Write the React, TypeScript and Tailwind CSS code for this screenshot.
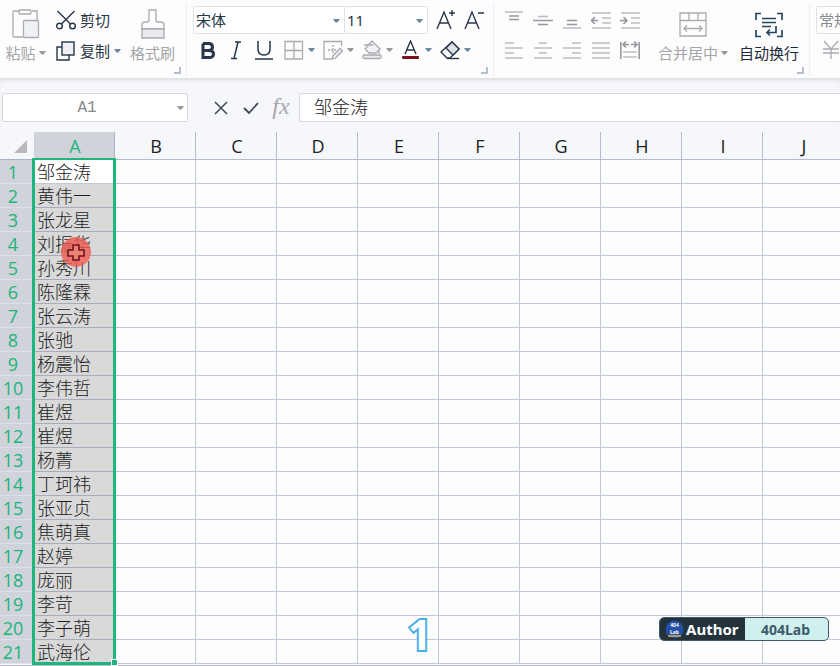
import type { ReactNode } from "react";

const COLUMNS = ["A", "B", "C", "D", "E", "F", "G", "H", "I", "J"];

const NAMES = [
  "邹金涛", "黄伟一", "张龙星", "刘振华", "孙秀川", "陈隆霖", "张云涛",
  "张驰", "杨震怡", "李伟哲", "崔煜", "崔煜", "杨菁", "丁珂祎",
  "张亚贞", "焦萌真", "赵婷", "庞丽", "李苛", "李子萌", "武海伦",
];

function Icon({ w = 20, h = 20, color = "#a9abb0", stroke = 1.3, children }: {
  w?: number; h?: number; color?: string; stroke?: number; children: ReactNode;
}) {
  return (
    <svg width={w} height={h} viewBox={`0 0 ${w} ${h}`} fill="none" stroke={color} strokeWidth={stroke} className="shrink-0" aria-hidden="true">
      {children}
    </svg>
  );
}

function Caret({ color = "#6f86a3" }: { color?: string }) {
  return (
    <svg width="7" height="4" viewBox="0 0 7 4" className="shrink-0" aria-hidden="true">
      <path d="M0 0H7L4.5 3.5H2.5Z" fill={color} />
    </svg>
  );
}

function Launcher() {
  return (
    <button aria-label="更多设置" className="absolute right-[5px] bottom-[2px]">
      <svg width="7" height="7" viewBox="0 0 7 7" fill="none" stroke="#b3bfd0" strokeWidth="2">
        <path d="M6 0V6H0" />
      </svg>
    </button>
  );
}

function Picker({ label, value, className }: { label: string; value: string; className: string }) {
  return (
    <div className={`relative h-7 border border-[#dfe2e7] bg-white ${className}`}>
      <select aria-label={label} defaultValue={value} className="h-full w-full appearance-none bg-transparent pl-[2px] text-[15px] outline-none">
        <option>{value}</option>
      </select>
      <span className="pointer-events-none absolute top-3 right-[4px] flex"><Caret /></span>
    </div>
  );
}

function Tool({ label, caret, children }: { label: string; caret?: string; children: ReactNode }) {
  return (
    <button aria-label={label} className="flex h-6 w-[39px] items-center gap-1 pl-[6px]">
      {children}
      <Caret color={caret} />
    </button>
  );
}

function AlignButton({ label, d, dark }: { label: string; d: string; dark?: string }) {
  return (
    <button aria-label={label} className="flex h-6 w-[29px] items-center justify-center">
      <Icon stroke={1.6} color="#bbbdc1">
        <path d={d} />
        {dark && <path d={dark} stroke="#96999f" />}
      </Icon>
    </button>
  );
}

function Ribbon() {
  return (
    <header className="relative z-10 flex h-[78px] items-start overflow-hidden bg-[#fdfdfd] pt-1 text-[15px] leading-5 whitespace-nowrap">
      <div className="relative flex h-[72px] w-[187px] shrink-0 border-r border-[#eceef1]">
        <button className="flex w-[51px] flex-col items-center gap-1 pt-[5px] text-[#a3a5a8]">
          <Icon w={28} h={30}>
            <path d="M7 2H2Q1 2 1 3V27Q1 28 2 28H11M20 2H25V11" />
            <rect x="7" y="1" width="12" height="4" rx="1" />
            <rect x="11.500" y="11.500" width="15" height="17" rx="1" fill="#eff1f4" />
          </Icon>
          <span className="flex items-center gap-[3px]">粘贴<Caret color="#9799a1" /></span>
        </button>
        <div className="flex w-[74px] flex-col gap-[7px] pt-1 pl-[5px] text-[#2a3646]">
          <button className="flex h-6 items-center gap-1">
            <Icon color="#27364a" stroke={1.4}>
              <path d="M1.500 1L14.500 14M18.500 1L5.500 14" />
              <circle cx="3.500" cy="16" r="2.800" />
              <circle cx="16.500" cy="16" r="2.800" />
            </Icon>
            剪切
          </button>
          <button className="flex h-6 items-center gap-1">
            <Icon color="#27364a" stroke={1.4}>
              <path d="M6 6H1V19H13V14" />
              <rect x="6" y="1" width="12" height="13" fill="#eff1f4" />
            </Icon>
            复制<Caret />
          </button>
        </div>
        <button className="flex w-[55px] flex-col items-center gap-1 pt-[5px] text-[#a3a5a8]">
          <Icon w={24} h={30}>
            <path d="M8 1H15V11Q15 13 17 13H20Q23 13 23 16V20H1V16Q1 13 4 13H6Q8 13 8 11Z" />
            <path d="M1 20H23V29H1Z" fill="#e9ebef" />
          </Icon>
          格式刷
        </button>
        <Launcher />
      </div>

      <div className="relative flex h-[72px] w-[307px] shrink-0 flex-col gap-1 border-r border-[#eceef1] pt-[2px] pl-[6px]">
        <div className="flex h-7 items-center">
          <Picker label="字体" value="宋体" className="w-[152px] rounded-l-[2px] text-[#27364a]" />
          <Picker label="字号" value="11" className="w-[83px] rounded-r-[2px] border-l-0 text-[#27364a]" />
          <button aria-label="增大字号" className="ml-2 flex w-7">
            <Icon color="#27364a" stroke={1.4} h={22}>
              <path d="M1 20L8 3L15 20M3.500 14H12.500M13 4H19M16 1V7" />
            </Icon>
          </button>
          <button aria-label="减小字号" className="flex">
            <Icon color="#27364a" stroke={1.4} h={22}>
              <path d="M1 20L8 3L15 20M3.500 14H12.500M14 4H20" />
            </Icon>
          </button>
        </div>
        <div className="flex h-6 items-center">
          <button aria-label="加粗" className="flex w-[29px] justify-center">
            <Icon w={16} color="#27364a" stroke={3}>
              <path d="M3 3.500H8.500Q12.500 3.500 12.500 7Q12.500 10.500 8.500 10.500H3M8.500 10.500Q13.500 10.500 13.500 14Q13.500 17.500 9 17.500H3V3.500" />
            </Icon>
          </button>
          <button aria-label="倾斜" className="flex w-7 justify-center">
            <Icon w={12} color="#27364a" stroke={1.5}>
              <path d="M5 2H11M1 18.500H7M8 2L4 18.500" />
            </Icon>
          </button>
          <button aria-label="下划线" className="flex w-7 justify-center">
            <Icon color="#27364a" stroke={1.5}>
              <path d="M4 1V9Q4 15 10 15T16 9V1M1 19H19" />
            </Icon>
          </button>
          <Tool label="边框">
            <Icon><path d="M1 1.500H18.500V19H1ZM10 1.500V19M1 10.500H18.500" /></Icon>
          </Tool>
          <Tool label="绘制边框" caret="#9799a1">
            <Icon>
              <path d="M18.500 6V1.500H1V19H8" />
              <path d="M10 5V14M5 10H13" strokeDasharray="2 1" />
              <path d="M9 19L10 15.500L17 8.500L19.500 11L12.500 18Z" fill="#e9ebef" />
            </Icon>
          </Tool>
          <Tool label="填充颜色" caret="#9799a1">
            <Icon>
              <path d="M10 1L3 9L7 13H14L18 9Z" fill="#eff1f4" />
              <path d="M2 5H11M17 9V14" />
              <rect x="1" y="15" width="18" height="3.500" rx="1" fill="#e9ebef" />
            </Icon>
          </Tool>
          <Tool label="字体颜色">
            <Icon color="#27364a" stroke={1.4}>
              <path d="M4 14L9.500 1L15 14M6 10H13" />
              <rect x="1" y="16" width="17" height="3" rx="1" fill="#7a1020" stroke="none" />
            </Icon>
          </Tool>
          <Tool label="清除">
            <Icon color="#27364a" stroke={1.4}>
              <path d="M12 2L19 9L10 18H7L1 12Z" />
              <path d="M12 2L19 9L13 15L6 8Z" fill="#dfe2e7" />
              <path d="M7 18.500H19" />
            </Icon>
          </Tool>
        </div>
        <Launcher />
      </div>

      <div className="relative flex h-[72px] w-[316px] shrink-0 border-r border-[#eceef1] pl-[5px]">
        <div className="flex w-[145px] flex-col gap-[6px] pt-1">
          <div className="flex">
            <AlignButton label="顶端对齐" d="M1 2H19" dark="M5 6H15M5 9.500H15" />
            <AlignButton label="垂直居中" d="M5 6.500H15" dark="M0 10.500H20M5 14.500H15" />
            <AlignButton label="底端对齐" d="M1 18H19" dark="M5 10.500H15M5 14.500H15" />
            <AlignButton label="减少缩进" d="M1 3H20M11 8H20M11 13H20M1 18H20" dark="M1 10.500H7M4 7L0.500 10.500L4 14" />
            <AlignButton label="增加缩进" d="M1 3H20M11 8H20M11 13H20M1 18H20" dark="M0 10.500H7M3.500 7L7 10.500L3.500 14" />
          </div>
          <div className="flex">
            <AlignButton label="左对齐" d="M1 3H10M1 8H19M1 13H10M1 18H19" />
            <AlignButton label="水平居中" d="M6 3H14M1 8H19M6 13H14M1 18H19" />
            <AlignButton label="右对齐" d="M10 3H19M1 8H19M10 13H19M1 18H19" />
            <AlignButton label="两端对齐" d="M1 3H19M1 8H19M1 13H19M1 18H19" />
            <AlignButton label="分散对齐" d="M3 12H17M3 17H17" dark="M0.800 2V19M19.200 2V19M3 4.500H9M6 1.500L3 4.500L6 7.500M11 4.500H17M14 1.500L17 4.500L14 7.500" />
          </div>
        </div>
        <button className="ml-[11px] flex w-[76px] flex-col items-center gap-[3px] pt-2 text-[#a3a5a8]">
          <Icon w={28} h={28}>
            <path d="M1 1H27V24H1ZM1 8.500H27M10 1V8.500M19 1V8.500M5 16.500H23M8 13.500L5 16.500L8 19.500M20 13.500L23 16.500L20 19.500" />
          </Icon>
          <span className="flex items-center gap-[3px]">合并居中<Caret color="#9799a1" /></span>
        </button>
        <button className="ml-1 flex w-[68px] flex-col items-center gap-[3px] pt-2 text-[#1f2a38]">
          <Icon w={28} h={28} color="#27465c" stroke={1.7}>
            <path d="M6 1.500H1V8M22 1.500H27V8M1 18V24.500H6M27 18V24.500H22M7 6.500H21M7 10.500H21M7 14.500H16M21 14V20.500H12M15 17.500L12 20.500L15 23.500" />
          </Icon>
          自动换行
        </button>
        <Launcher />
      </div>

      <div className="flex min-w-[130px] flex-col gap-1 pt-[2px] pl-[6px]">
        <Picker label="数字格式" value="常规" className="w-[120px] rounded-[2px] text-[#85888d]" />
        <button aria-label="货币" className="flex h-6 items-center pl-[5px]">
          <Icon><path d="M3 1L10 9L17 1M2 9H18M2 13H18M10 9V19" /></Icon>
        </button>
      </div>
    </header>
  );
}

function FormulaBar() {
  return (
    <div className="flex h-[54px] items-start pt-[15px] pl-[2px] shadow-[inset_0_4px_4px_-2px_rgba(0,0,0,0.12)]">
      <div className="relative h-[29px] w-[186px] shrink-0 rounded-[2px] border border-[#d4d7dc] bg-white">
        <input aria-label="名称框" defaultValue="A1" className="h-full w-full bg-transparent pr-4 text-center font-['Liberation_Mono',monospace] text-[16px] text-[#858a86] outline-none" />
        <span className="pointer-events-none absolute top-3 right-[3px] flex"><Caret color="#9799a1" /></span>
      </div>
      <div className="ml-[18px] flex h-[29px] shrink-0 items-center">
        <button aria-label="取消" className="flex w-[30px] justify-center">
          <Icon w={14} h={14} color="#3b4754" stroke={1.5}><path d="M1 1L13 13M13 1L1 13" /></Icon>
        </button>
        <button aria-label="输入" className="flex w-[30px] justify-center">
          <Icon w={16} h={14} color="#3b4754" stroke={1.8}><path d="M1 7L6 12L15 2" /></Icon>
        </button>
        <button aria-label="插入函数" className="w-[30px] pb-1 text-center font-['Liberation_Serif',serif] text-[24px] leading-6 text-[#a6a8ad] italic">fx</button>
      </div>
      <input aria-label="编辑栏" defaultValue="邹金涛" className="ml-[3px] h-[29px] min-w-0 flex-1 rounded-l-[2px] border border-r-0 border-[#d4d7dc] bg-white pb-1 pl-[14px] text-[18px] font-light text-[#1d1d1f] outline-none" />
    </div>
  );
}

function Sheet() {
  return (
    <main className="relative overflow-hidden">
      <table className="w-[844px] min-w-full table-fixed border-separate border-spacing-0 bg-[#fdfdfd] font-['Open_Sans','Noto_Sans_CJK_SC',sans-serif] text-[18px] leading-[22px]">
        <colgroup>
          <col className="w-[34px]" />
          {COLUMNS.map((c) => <col key={c} className="w-[81px]" />)}
        </colgroup>
        <thead>
          <tr className="h-7 bg-[#f5f7fa]">
            <th aria-label="全选" className="border-b border-[#a9b3c8] p-0">
              <svg width="34" height="27" viewBox="0 0 34 27" className="block" aria-hidden="true">
                <path d="M27 8V21H14Z" fill="#b9b9bc" />
              </svg>
            </th>
            {COLUMNS.map((c) => (
              <th key={c} scope="col" className={c === "A"
                ? "border-r border-b border-[#a9b3c8] bg-[#d0d3da] p-0 pl-[2px] font-normal text-[#20b47c]"
                : "border-r border-b border-[#b4bccd] p-0 pl-[2px] font-normal text-[#1c1f24]"}>{c}</th>
            ))}
          </tr>
        </thead>
        <tbody>
          {NAMES.map((name, i) => (
            <tr key={i} className="h-6">
              <th scope="row" className="border-b border-[#dbe0ea] bg-[#d0d3da] p-0 pr-2 text-center font-normal text-[#20b47c]">{i + 1}</th>
              <td className={i === 0
                ? "border-r border-b border-[#c0c8da] bg-white p-0 pl-[3px] font-light text-[#1d1d1f]"
                : "border-r border-b border-[#a5adbb] bg-[#d9d9d9] p-0 pl-[3px] font-light text-[#1d1d1f]"}>{name}</td>
              {COLUMNS.slice(1).map((c) => <td key={c} className="border-r border-b border-[#c0c8da] p-0" />)}
            </tr>
          ))}
        </tbody>
      </table>
      <div className="mt-px h-px bg-[#b9bcc6]" />

      <div className="pointer-events-none absolute top-[26px] bottom-px left-8 w-[84px] border-x-3 border-t-2 border-b-3 border-[#1fb57c]">
        <span className="absolute -right-[5px] -bottom-[4px] h-[7px] w-[7px] border border-white bg-[#1fb57c]" />
      </div>

      <svg width="32" height="32" viewBox="0 0 32 32" className="absolute top-[104px] left-[60px]" aria-hidden="true">
        <circle cx="16" cy="16" r="15" fill="#ef5b50" fillOpacity="0.8" />
        <path d="M13 9H19V14H24V20H19V24H13V20H8V14H13Z" fill="#eb8276" stroke="#74141b" strokeWidth="1.600" />
      </svg>

      <span className="absolute bottom-[5px] left-[408px] font-['Open_Sans',sans-serif] text-[41px] leading-[54px] font-bold text-white [-webkit-text-stroke:4px_#49aee6] [paint-order:stroke]">1</span>

      <div className="absolute right-[11px] bottom-[25px] flex h-6 w-[170px] overflow-hidden rounded-[5px] border border-[#40596a] bg-[#d0f0ed] font-bold">
        <span className="flex w-[85px] items-center gap-[2px] bg-[#24323b] pl-[5px] text-[15px] text-white">
          <svg width="19" height="19" viewBox="0 0 19 19" className="shrink-0" aria-hidden="true">
            <circle cx="9.500" cy="9.500" r="9" fill="#234fa4" />
            <text x="9.500" y="7" textAnchor="middle" fontSize="5" fill="#fff">404</text>
            <text x="9.500" y="14" textAnchor="middle" fontSize="5" fill="#fff">Lab</text>
            <path d="M3 16H16" stroke="#e9ac4c" strokeWidth="1.500" />
          </svg>
          Author
        </span>
        <span className="flex flex-1 items-center justify-center pr-[2px] text-[14px] text-[#3d5a6b]">404Lab</span>
      </div>
    </main>
  );
}

export default function App() {
  return (
    <div className="min-h-screen overflow-hidden bg-[#f5f7fa] font-['Noto_Sans','Noto_Sans_CJK_SC',sans-serif]">
      <Ribbon />
      <FormulaBar />
      <Sheet />
    </div>
  );
}
